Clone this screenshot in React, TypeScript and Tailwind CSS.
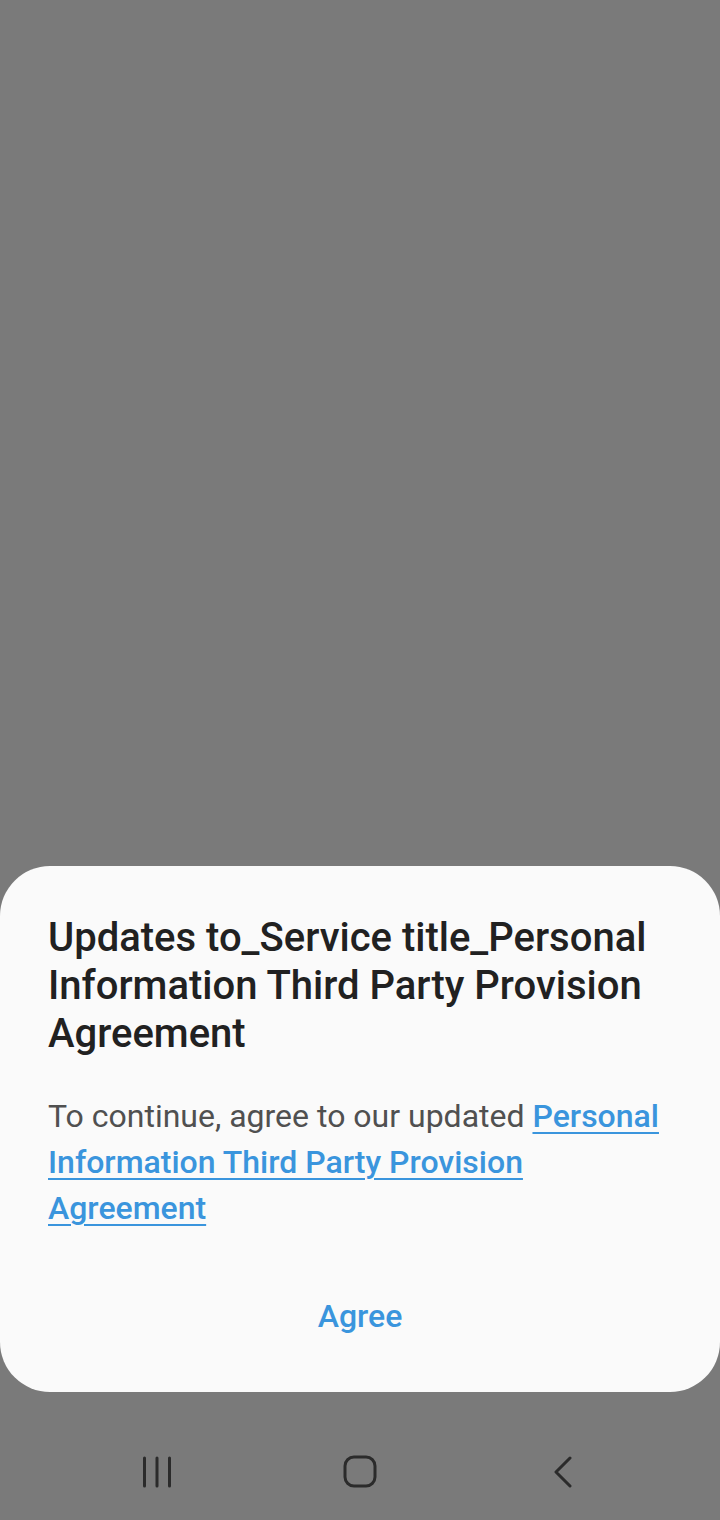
const NavBar = () => (
  <div className="h-[128px] pt-8 flex items-center justify-center gap-[83px]">
    {/* recents */}
    <div className="w-[120px] flex justify-center">
      <svg width="32" height="32" viewBox="0 0 32 32" fill="none" stroke="#2b2b2b" strokeWidth="3" strokeLinecap="round">
        <path d="M3.5 2v28M16 2v28M28.5 2v28" />
      </svg>
    </div>
    {/* home */}
    <div className="w-[120px] flex justify-center">
      <svg width="34" height="34" viewBox="0 0 34 34" fill="none" stroke="#2b2b2b" strokeWidth="3">
        <rect x="2" y="2" width="30" height="29" rx="9" />
      </svg>
    </div>
    {/* back */}
    <div className="w-[120px] flex justify-center">
      <svg width="20" height="32" viewBox="0 0 20 32" fill="none" stroke="#2b2b2b" strokeWidth="3" strokeLinecap="round" strokeLinejoin="round">
        <path d="M17 2 3 16l14 14" />
      </svg>
    </div>
  </div>
);

export default function App() {
  return (
    <div
      className="h-[1520px] w-[720px] bg-[#7a7a7a] flex flex-col"
      style={{ fontFamily: "Roboto, 'Noto Sans', sans-serif" }}
    >
      <div className="flex-1" />

      <div className="bg-[#fafafa] rounded-[50px] px-12 pt-12 pb-14">
        <h1 className="text-[40px] leading-[48px] font-medium text-[#212121]">
          Updates to_Service title_Personal Information Third Party Provision Agreement
        </h1>

        <p className="mt-[35px] text-[32px] leading-[46px] text-[#505050]">
          To continue, agree to our updated{" "}
          <a
            href="#"
            className="text-[#3a95dd] font-medium underline decoration-2 underline-offset-[5px]"
          >
            Personal Information Third Party Provision Agreement
          </a>
        </p>

        <div className="mt-[65px] flex justify-center">
          <button className="text-[32px] leading-[40px] font-medium text-[#3a95dd]">
            Agree
          </button>
        </div>
      </div>

      <NavBar />
    </div>
  );
}
